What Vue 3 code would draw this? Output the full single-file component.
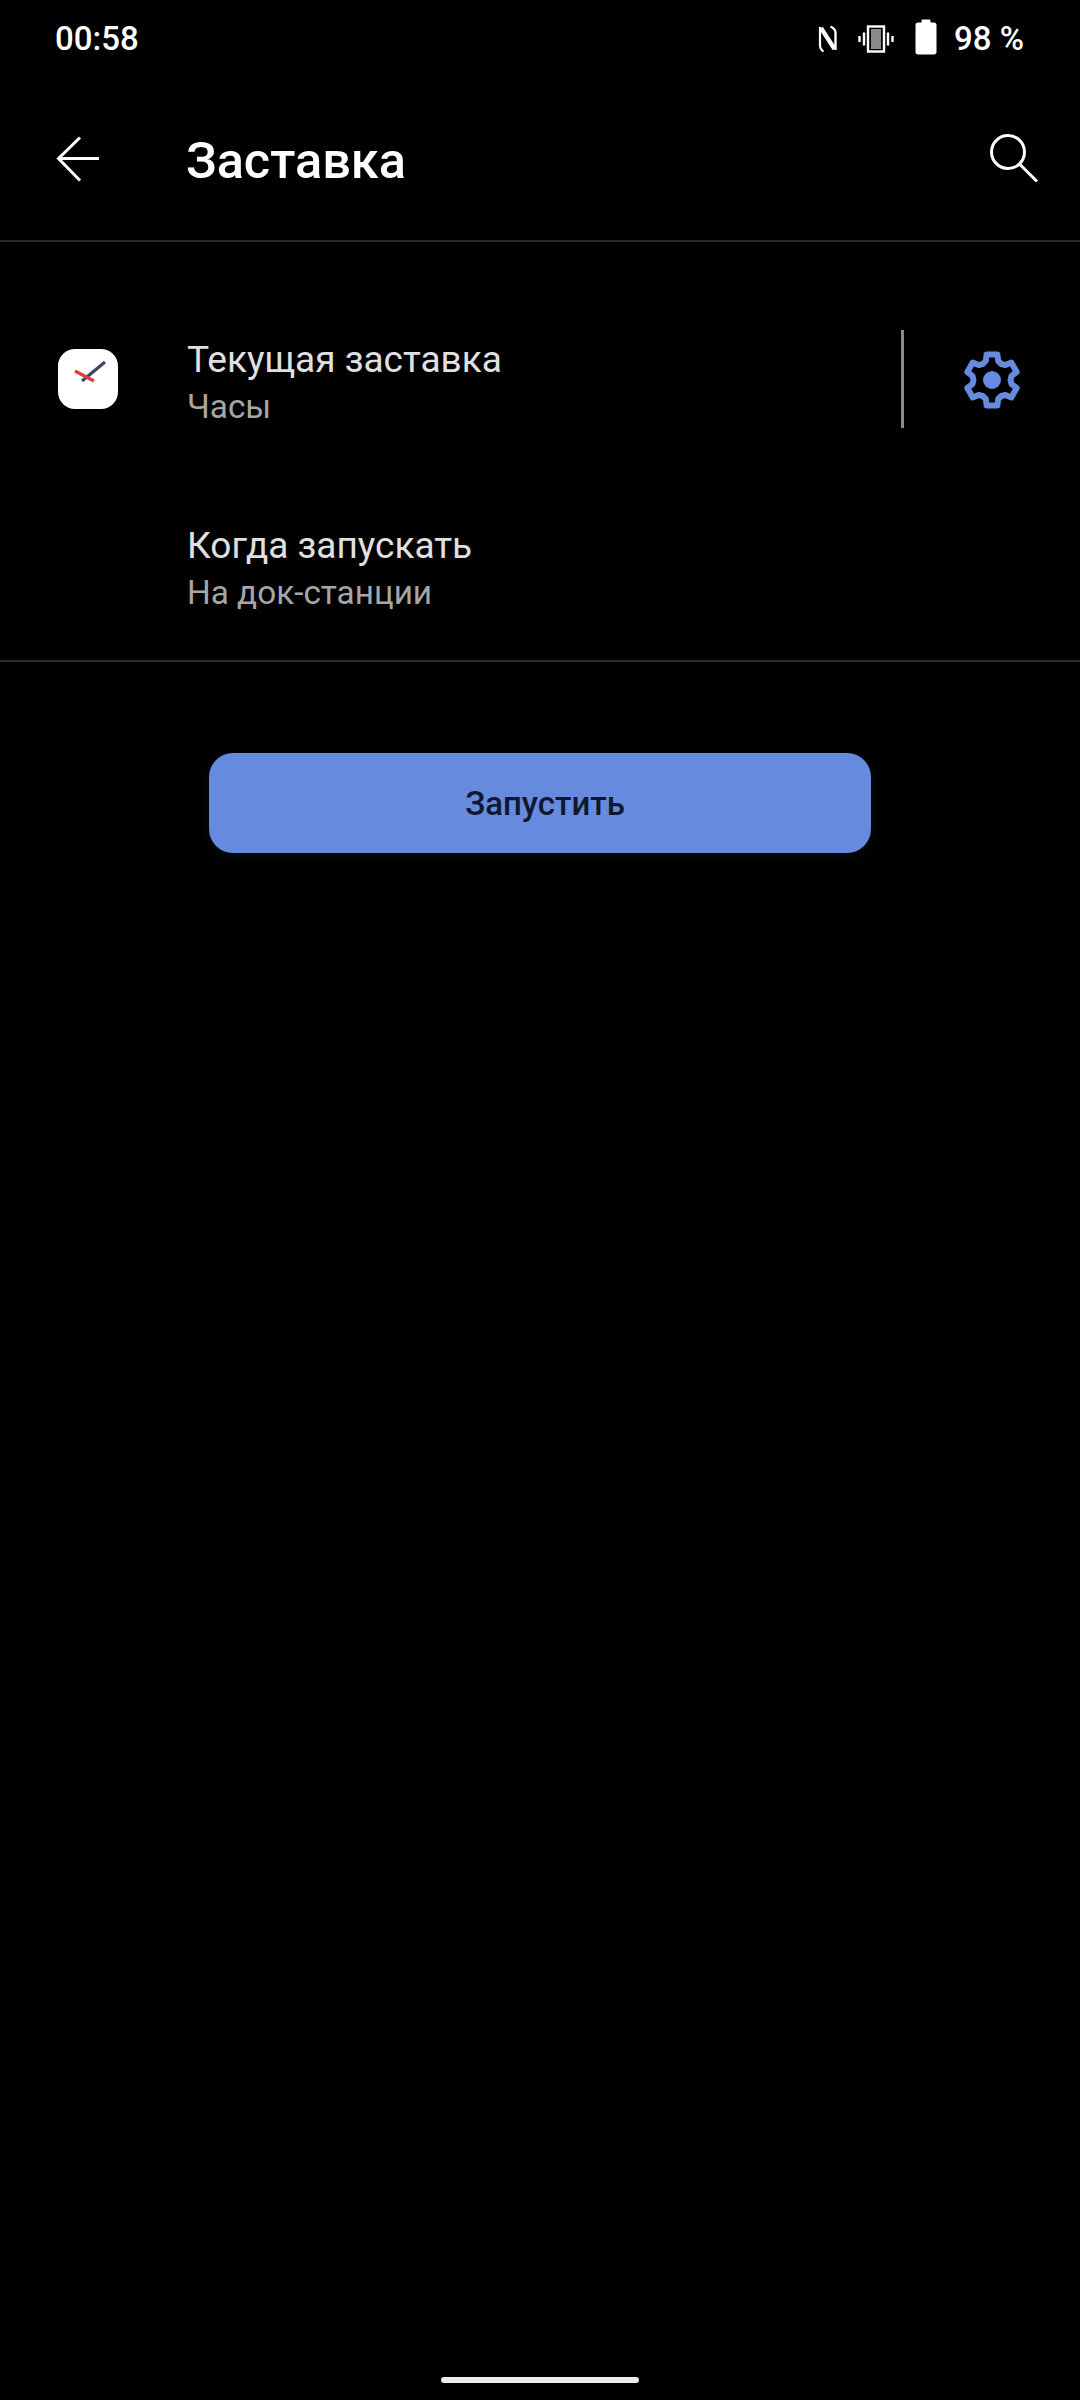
<script setup>
// gear outline: six teeth, points worked out from polar coords
const gearPoints = []
for (let i = 0; i < 6; i++) {
  const a = 90 + i * 60
  const offs = [[-30, 18.5], [-18, 20], [-12, 26], [12, 26], [18, 20]]
  offs.forEach(([d, r]) => {
    const rad = ((a + d) * Math.PI) / 180
    gearPoints.push((30 + r * Math.cos(rad)).toFixed(1) + ',' + (30 - r * Math.sin(rad)).toFixed(1))
  })
}
const gear = gearPoints.join(' ')

const rows = [
  { title: 'Текущая заставка', sub: 'Часы', current: true },
  { title: 'Когда запускать', sub: 'На док-станции', current: false },
]
</script>

<template>
  <div class="page">
    <div class="status">
      <span class="time">00:58</span>
      <div class="status_right">
        <svg class="ic_nfc" width="20" height="28" viewBox="0 0 20 28" fill="none" stroke="#fff">
          <path d="M2 2V20C2 23 3 25 5.500 26.500" stroke-width="2.200" />
          <path d="M3 3L16.500 24" stroke-width="4.200" />
          <path d="M17.500 25V7.500C17.500 5 15.500 3 12.500 1.500" stroke-width="2.400" />
        </svg>
        <svg class="ic_vib" width="36" height="28" viewBox="0 0 36 28" fill="none">
          <rect x="10" y="1.500" width="16" height="25" stroke="#fff" stroke-width="2.400" />
          <rect x="13" y="4" width="10" height="20" fill="#8a8a8a" />
          <path d="M6 7.500V20.500M1.500 11V17M30 7.500V20.500M34.500 11V17" stroke="#fff" stroke-width="2.400" />
        </svg>
        <svg class="ic_bat" width="22" height="36" viewBox="0 0 22 36" fill="#fff">
          <path d="M6.500 1.500C6.500 .8 7 .5 7.500 .5H14.500C15 .5 15.500 .8 15.500 1.500V3.500H19C20.500 3.500 21.500 4.500 21.500 6V33C21.500 34.500 20.500 35.500 19 35.500H3C1.500 35.500 .5 34.500 .5 33V6C.5 4.500 1.500 3.500 3 3.500H6.500Z" />
        </svg>
        <span class="pct">98 %</span>
      </div>
    </div>

    <div class="toolbar">
      <svg class="ic_back" width="44" height="46" viewBox="0 0 44 46" fill="none" stroke="#fff" stroke-width="3">
        <path d="M43 22.500H3" />
        <path d="M24 1.500L2.500 22.500L24 44.500" />
      </svg>
      <h1 class="title">Заставка</h1>
      <svg class="ic_search" width="50" height="50" viewBox="0 0 50 50" fill="none" stroke="#fff" stroke-width="3">
        <circle cx="18" cy="18" r="16.500" />
        <path d="M29.500 30L47 47.500" />
      </svg>
    </div>

    <div class="list">
      <div class="row" v-for="row in rows" :key="row.title">
        <div class="row_icon">
          <div class="clock" v-if="row.current">
            <svg width="60" height="60" viewBox="0 0 60 60" fill="none" stroke-width="3.200">
              <path d="M24 32L47 13" stroke="#3e4763" />
              <path d="M17 22L36 32" stroke="#d8413c" />
            </svg>
          </div>
        </div>
        <div class="row_text">
          <div class="row_title">{{ row.title }}</div>
          <div class="row_sub">{{ row.sub }}</div>
        </div>
        <template v-if="row.current">
          <div class="vline"></div>
          <svg class="ic_gear" width="60" height="60" viewBox="0 0 60 60">
            <polygon :points="gear" fill="none" stroke="#668ade" stroke-width="6" stroke-linejoin="round" />
            <circle cx="30" cy="30" r="9" fill="#668ade" />
          </svg>
        </template>
      </div>
    </div>

    <div class="btn_wrap">
      <button class="btn">Запустить</button>
    </div>

    <div class="home_bar"></div>
  </div>
</template>

<style>
html, body {background:#000;}
</style>
<style scoped>
.page {width:1080px; height:2400px; background:#000; color:#fff; font-family:Roboto, "Noto Sans", sans-serif; display:flex; flex-direction:column; overflow:hidden;}

.status {height:78px; padding:0 56px 0 55px; display:flex; align-items:center; justify-content:space-between; box-sizing:border-box;}
.time, .pct {font-size:33px; font-weight:500; line-height:40px;}
.status_right {display:flex; align-items:center;}
.ic_nfc {margin-right:20px;}
.ic_vib {margin-right:21px;}
.ic_bat {margin-right:17px; margin-top:-4px;}

.toolbar {height:162px; padding:0 40px 0 56px; display:flex; align-items:center; border-bottom:2px solid #2a2a2a;}
.title {flex:1; margin:0 0 0 86px; padding-top:3px; font-size:50.500px; font-weight:500; line-height:60px;}
.ic_search {margin-top:-1px;}

.list {padding:44px 0 2px; border-bottom:2px solid #2a2a2a;}
.row {height:186px; display:flex; align-items:center; padding-right:58px;}
.row_icon {width:187px; padding-left:58px; box-sizing:border-box; flex:none;}
.clock {width:60px; height:60px; background:#fff; border-radius:17px;}
.clock svg {display:block;}
.row_text {flex:1; padding-top:5px;}
.row_title {font-size:37px; line-height:48px; margin-bottom:2px; color:#e0e0e0;}
.row_sub {font-size:33.300px; line-height:42px; color:#a6a6a6;}
.vline {width:3px; height:98px; background:#8a8a8a; margin-right:58px;}
.ic_gear {margin-top:2px;}

.btn_wrap {padding-top:91px; display:flex; justify-content:center;}
.btn {width:662px; height:100px; padding:0 0 0 10px; border:0; border-radius:24px; background:#668ade; color:#10182e; font-family:Roboto, sans-serif; font-size:33px; font-weight:500; box-shadow:0 4px 12px rgba(102,138,222,.08);}

.home_bar {width:198px; height:6px; border-radius:3px; background:#eee; margin:auto auto 17px;}
</style>
